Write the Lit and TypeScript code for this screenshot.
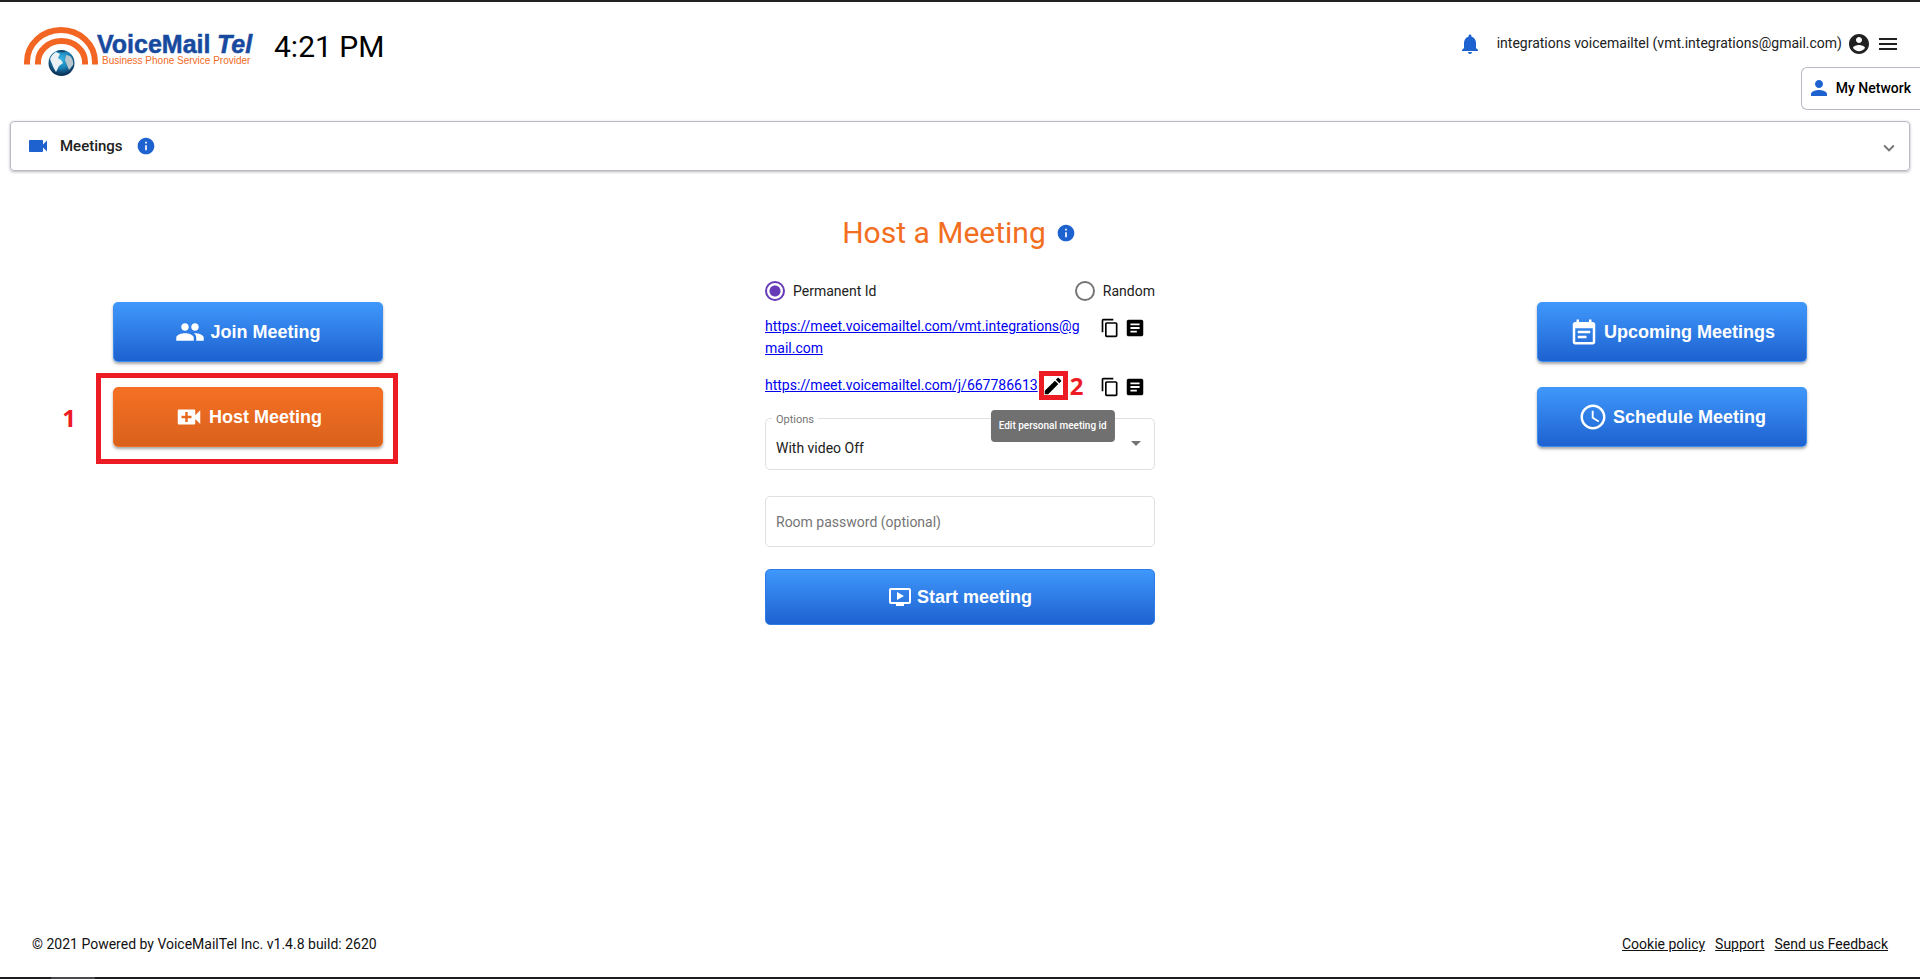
import { LitElement, html, svg, css } from "lit";
import { customElement, state } from "lit/decorators.js";

const ICONS: Record<string, string> = {
  bell: "M12 22c1.1 0 2-.9 2-2h-4c0 1.1.89 2 2 2zm6-6v-5c0-3.07-1.64-5.64-4.5-6.32V4c0-.83-.67-1.5-1.5-1.5s-1.5.67-1.5 1.5v.68C7.63 5.36 6 7.92 6 11v5l-2 2v1h16v-1l-2-2z",
  account: "M12 2C6.48 2 2 6.48 2 12s4.48 10 10 10 10-4.48 10-10S17.52 2 12 2zm0 3c1.66 0 3 1.34 3 3s-1.34 3-3 3-3-1.34-3-3 1.34-3 3-3zm0 14.2c-2.5 0-4.71-1.28-6-3.22.03-1.99 4-3.08 6-3.08 1.99 0 5.97 1.09 6 3.08-1.29 1.94-3.5 3.22-6 3.22z",
  menu: "M3 18h18v-2H3v2zm0-5h18v-2H3v2zm0-7v2h18V6H3z",
  person: "M12 12c2.21 0 4-1.79 4-4s-1.79-4-4-4-4 1.79-4 4 1.79 4 4 4zm0 2c-2.67 0-8 1.34-8 4v2h16v-2c0-2.66-5.33-4-8-4z",
  video: "M17 10.5V7c0-.55-.45-1-1-1H4c-.55 0-1 .45-1 1v10c0 .55.45 1 1 1h12c.55 0 1-.45 1-1v-3.5l4 4v-11l-4 4z",
  info: "M12 2C6.48 2 2 6.48 2 12s4.48 10 10 10 10-4.48 10-10S17.52 2 12 2zm1 15h-2v-6h2v6zm0-8h-2V7h2v2z",
  expand: "M16.59 8.59L12 13.17 7.41 8.59 6 10l6 6 6-6z",
  group: "M16 11c1.66 0 2.99-1.34 2.99-3S17.66 5 16 5c-1.66 0-3 1.34-3 3s1.34 3 3 3zm-8 0c1.66 0 2.99-1.34 2.99-3S9.66 5 8 5C6.34 5 5 6.34 5 8s1.34 3 3 3zm0 2c-2.33 0-7 1.17-7 3.5V19h14v-2.5c0-2.33-4.67-3.5-7-3.5zm8 0c-.29 0-.62.02-.97.05 1.16.84 1.97 1.97 1.97 3.45V19h6v-2.5c0-2.33-4.67-3.5-7-3.5z",
  videoCall: "M17 10.5V7c0-.55-.45-1-1-1H4c-.55 0-1 .45-1 1v10c0 .55.45 1 1 1h12c.55 0 1-.45 1-1v-3.5l4 4v-11l-4 4zM14 13h-3v3H9v-3H6v-2h3V8h2v3h3v2z",
  eventNote: "M19 4h-1V2h-2v2H8V2H6v2H5c-1.11 0-1.99.9-1.99 2L3 20c0 1.1.89 2 2 2h14c1.1 0 2-.9 2-2V6c0-1.1-.9-2-2-2zm0 16H5V9h14v11zM17 11H7v2h10v-2zm-3 4H7v2h7v-2z",
  clock: "M11.99 2C6.47 2 2 6.48 2 12s4.47 10 9.99 10C17.52 22 22 17.52 22 12S17.52 2 11.99 2zM12 20c-4.42 0-8-3.58-8-8s3.58-8 8-8 8 3.58 8 8-3.58 8-8 8zM12.5 7H11v6l5.25 3.15.75-1.23-4.5-2.67z",
  onDemand: "M21 3H3c-1.11 0-2 .89-2 2v12c0 1.1.89 2 2 2h5v2h8v-2h5c1.1 0 1.99-.9 1.99-2L23 5c0-1.11-.9-2-2-2zm0 14H3V5h18v12zm-5-6l-7 4V7z",
  copy: "M16 1H4c-1.1 0-2 .9-2 2v14h2V3h12V1zm3 4H8c-1.1 0-2 .9-2 2v14c0 1.1.9 2 2 2h11c1.1 0 2-.9 2-2V7c0-1.1-.9-2-2-2zm0 16H8V7h11v14z",
  article: "M19 3H5c-1.1 0-2 .9-2 2v14c0 1.1.9 2 2 2h14c1.1 0 2-.9 2-2V5c0-1.1-.9-2-2-2zm-5 14H7v-2h7v2zm3-4H7v-2h10v2zm0-4H7V7h10v2z",
  edit: "M3 17.25V21h3.75L17.81 9.94l-3.75-3.75L3 17.25zM20.71 7.04c.39-.39.39-1.02 0-1.41l-2.34-2.34c-.39-.39-1.02-.39-1.41 0l-1.83 1.83 3.75 3.75 1.83-1.83z",
};

const icon = (name: string, size: number) => html`
  <svg width=${size} height=${size} viewBox="0 0 24 24" fill="currentColor" aria-hidden="true">
    ${svg`<path fill-rule="evenodd" d=${ICONS[name]}></path>`}
  </svg>`;

@customElement("app-root")
export class AppRoot extends LitElement {
  @state() private idMode = "permanent";

  static styles = css`
    * { box-sizing: border-box; }
    :host {
      box-sizing: border-box;
      display: flex;
      flex-direction: column;
      min-height: 100vh;
      border-top: 2px solid #232021;
      background: #fff;
      color: #212121;
      font: 14px/22px Roboto, sans-serif;
    }
    svg { display: block; flex: none; }
    a { color: inherit; }
    button {
      display: flex;
      align-items: center;
      justify-content: center;
      padding: 0;
      border: 0;
      background: none;
      color: inherit;
      font: inherit;
      cursor: pointer;
    }
    .blue { color: #1e62d0; }

    .header { display: flex; align-items: flex-start; justify-content: space-between; padding: 0 20px 0 24px; height: 65px; }
    .brand { display: flex; align-items: center; gap: 18px; padding-top: 22px; }
    .logo-voice, .logo-tel { font: bold 25px "Liberation Sans", Arial, sans-serif; fill: #174a9f; stroke: #174a9f; stroke-width: .5px; }
    .logo-tel { font-style: italic; }
    .logo-tag { font: 10px "Liberation Sans", Arial, sans-serif; fill: #f26a26; }
    .time { font-size: 30px; line-height: 36px; color: #000; margin-bottom: 10px; }
    .account { display: flex; align-items: center; gap: 5px; padding-top: 30px; }
    .account .user { padding: 0 0 2px 10px; }

    .network {
      align-self: flex-end;
      gap: 5px;
      height: 43px;
      padding: 0 9px 2px 5px;
      border: 1px solid #b8bac6;
      border-right: 0;
      border-radius: 6px 0 0 6px;
      color: #000;
      font-weight: 500;
    }

    .panel {
      display: flex;
      align-items: center;
      margin: 11px 10px 0;
      height: 50px;
      padding: 0 9px 0 15px;
      border: 1px solid #b8bac6;
      border-radius: 4px;
      box-shadow: 0 1px 3px rgba(0, 0, 0, .3);
    }
    .panel h2 { margin: 0 13px 0 10px; font-size: 15px; font-weight: 500; }
    .panel .toggle { margin-left: auto; padding-top: 4px; color: #757575; }

    .main { display: grid; grid-template-columns: 31fr 58fr 31fr; flex: 1; padding-top: 42px; justify-items: center; align-items: start; }
    .side { display: grid; gap: 25px; width: 270px; padding-top: 89px; }
    .action {
      width: 100%;
      height: 60px;
      gap: 5px;
      border: 1px solid #3b8df2;
      border-top-color: #3f97fb;
      border-radius: 5px;
      background: linear-gradient(#3f97fb, #1e62d0);
      box-shadow: 0 2px 3px rgba(0, 0, 0, .35);
      color: #fff;
      font: bold 18px "Liberation Sans", Arial, sans-serif;
    }
    .action.orange { border-color: #f36f21; background: linear-gradient(#f57024, #d9611c); }
    .action.start { height: 56px; margin-top: 22px; box-shadow: none; border-color: #2f7be6; }
    .marked { position: relative; }
    .frame { position: absolute; inset: -14px -15px -17px -17px; border: 5px solid #ed1c24; pointer-events: none; }
    .step { position: absolute; color: #ed1c24; font: bold 24px/24px "Open Sans", sans-serif; }
    .step.one { right: calc(100% + 37px); top: 19px; }
    .step.two { left: calc(100% + 6px); top: 0; }

    .form { display: flex; flex-direction: column; width: 390px; }
    .title { display: flex; align-items: center; justify-content: center; gap: 10px; height: 40px; padding-right: 2px; }
    h1 { margin: 0; font-size: 30px; line-height: 40px; font-weight: 400; color: #f26f21; }
    .radios { display: flex; justify-content: space-between; margin-top: 27px; }
    .radios label { display: flex; align-items: center; gap: 8px; }
    .radios input {
      appearance: none;
      width: 20px;
      height: 20px;
      margin: 0;
      border: 2px solid #757575;
      border-radius: 50%;
    }
    .radios input:checked { border-color: #673ab7; background: radial-gradient(circle, #673ab7 5px, transparent 6px); }
    .row { display: flex; align-items: flex-start; justify-content: space-between; padding-right: 9px; margin-top: 13px; }
    .row + .row { margin-top: 15px; }
    .row a { color: #00e; overflow-wrap: anywhere; }
    .address { display: flex; width: 320px; }
    .tools { display: flex; gap: 4px; padding-top: 2px; color: #000; }
    .edit { position: relative; margin-left: 4px; height: 24px; }
    .edit button { color: #000; height: 24px; }
    .edit .frame { inset: -3px -4px -2px -3px; }
    .tip {
      position: absolute;
      z-index: 1;
      left: 50%;
      top: 36px;
      transform: translateX(-50%);
      padding: 5px 8px;
      border-radius: 4px;
      background: #707070;
      color: #fff;
      font-size: 10px;
      font-weight: 500;
      white-space: nowrap;
    }
    fieldset { display: flex; position: relative; min-width: 0; margin: 12px 0 0; padding: 0; border: 1px solid #e0e0e0; border-radius: 5px; }
    legend { margin-left: 6px; padding: 4px 4px 0; font-size: 11px; line-height: 12px; color: #757575; }
    select, .password {
      width: 100%;
      padding: 0 10px;
      border: 0;
      background: none;
      color: #212121;
      font: inherit;
    }
    select { appearance: none; height: 43px; }
    .caret { position: absolute; right: 13px; top: 15px; border: 5px solid transparent; border-top-color: #757575; border-bottom: 0; pointer-events: none; }
    .password { height: 51px; margin-top: 26px; border: 1px solid #e0e0e0; border-radius: 5px; }
    .password::placeholder { color: #757575; opacity: 1; }

    .footer { display: flex; justify-content: space-between; padding: 0 32px 22px; color: #111; }
    .links { display: flex; gap: 10px; }
    .taskbar { height: 2px; background: linear-gradient(90deg, #1c1d21 51px, #48494c 51px, #48494c 95px, #1c1d21 95px); }
  `;

  private link(url: string, editable = false) {
    return html`
      <div class="row">
        <div class="address">
          <a href=${url}>${url}</a>
          ${editable ? html`
            <div class="edit">
              <button aria-label="Edit" aria-describedby="tip">${icon("edit", 22)}</button>
              <span class="frame"></span>
              <span class="step two">2</span>
              <span class="tip" id="tip" role="tooltip">Edit personal meeting id</span>
            </div>` : ""}
        </div>
        <div class="tools">
          <button aria-label="Copy link">${icon("copy", 20)}</button>
          <button aria-label="Copy invitation">${icon("article", 22)}</button>
        </div>
      </div>`;
  }

  private radio(value: string, text: string) {
    return html`<label>
      <input type="radio" name="room" .checked=${this.idMode === value} @change=${() => (this.idMode = value)}>${text}
    </label>`;
  }

  render() {
    return html`
      <header class="header">
        <div class="brand">
          <svg width="232" height="56" viewBox="0 0 232 56" role="img" aria-label="VoiceMailTel">
            <defs>
              <radialGradient id="globe" cx=".5" cy=".35" r=".6">
                <stop offset="0" stop-color="#35b4e4"></stop>
                <stop offset=".55" stop-color="#1c83b8"></stop>
                <stop offset="1" stop-color="#0c3358"></stop>
              </radialGradient>
            </defs>
            <g fill="none" stroke="#f26522" stroke-width="6">
              <path d="M3 40.500V38A34 32 0 0 1 71 38V40.500"></path>
              <path d="M14 40.500V38A23.500 21 0 0 1 61 38V40.500"></path>
            </g>
            <circle cx="37.5" cy="39" r="14" fill="#fff"></circle>
            <circle cx="37.5" cy="39" r="13" fill="url(#globe)"></circle>
            <path d="M26 35q2-5 6-7l4 2-2 4 3 2 2 3-4 3-3 6q-3-5-4-8z" fill="#e9f1f4"></path>
            <path d="M42 31l4 1q4 4 3 9l-4 5-2-5-2-5z" fill="#b9c7cc"></path>
            <path d="M32 27.500q5-3 11 0l-4 1z" fill="#174a6f"></path>
            <text class="logo-voice" x="73" y="29">VoiceMail</text>
            <text class="logo-tel" x="193" y="29">Tel</text>
            <text class="logo-tag" x="78" y="40">Business Phone Service Provider</text>
          </svg>
          <span class="time">4:21 PM</span>
        </div>
        <div class="account">
          <button class="blue" aria-label="Notifications">${icon("bell", 24)}</button>
          <span class="user">integrations voicemailtel (vmt.integrations@gmail.com)</span>
          <button aria-label="Account">${icon("account", 24)}</button>
          <button aria-label="Menu">${icon("menu", 24)}</button>
        </div>
      </header>
      <button class="network"><span class="blue">${icon("person", 24)}</span>My Network</button>
      <section class="panel">
        <span class="blue">${icon("video", 24)}</span>
        <h2>Meetings</h2>
        <span class="blue">${icon("info", 20)}</span>
        <button class="toggle" aria-label="Expand">${icon("expand", 22)}</button>
      </section>
      <main class="main">
        <div class="side">
          <button class="action">${icon("group", 30)}Join Meeting</button>
          <div class="marked">
            <button class="action orange">${icon("videoCall", 30)}Host Meeting</button>
            <span class="frame"></span>
            <span class="step one">1</span>
          </div>
        </div>
        <div class="form">
          <div class="title"><h1>Host a Meeting</h1><span class="blue">${icon("info", 20)}</span></div>
          <div class="radios">${this.radio("permanent", "Permanent Id")}${this.radio("random", "Random")}</div>
          ${this.link("https://meet.voicemailtel.com/vmt.integrations@gmail.com")}
          ${this.link("https://meet.voicemailtel.com/j/667786613", true)}
          <fieldset>
            <legend><label for="options">Options</label></legend>
            <select id="options"><option>With video Off</option><option>With video On</option></select>
            <span class="caret"></span>
          </fieldset>
          <input class="password" type="text" aria-label="Room password" placeholder="Room password (optional)">
          <button class="action start">${icon("onDemand", 24)}Start meeting</button>
        </div>
        <div class="side">
          <button class="action">${icon("eventNote", 30)}Upcoming Meetings</button>
          <button class="action">${icon("clock", 30)}Schedule Meeting</button>
        </div>
      </main>
      <footer class="footer">
        <span>© 2021 Powered by VoiceMailTel Inc. v1.4.8 build: 2620</span>
        <nav class="links"><a href="#">Cookie policy</a><a href="#">Support</a><a href="#">Send us Feedback</a></nav>
      </footer>
      <div class="taskbar"></div>
    `;
  }
}
